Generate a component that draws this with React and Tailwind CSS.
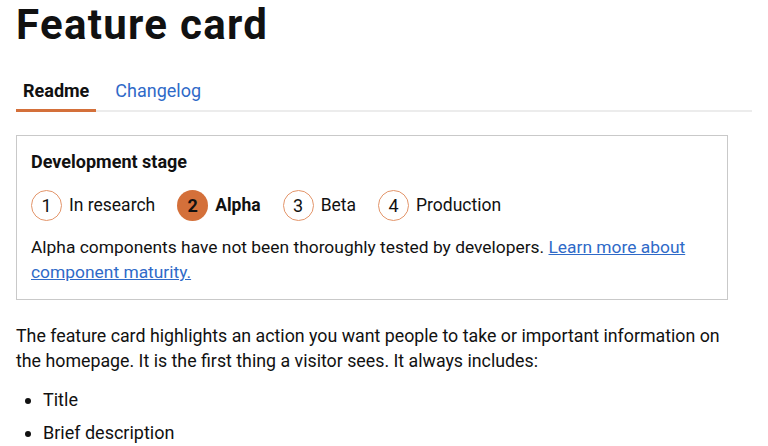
export default function App() {
  const stages = [
    { n: 1, label: "In research" },
    { n: 2, label: "Alpha", active: true },
    { n: 3, label: "Beta" },
    { n: 4, label: "Production" },
  ];

  return (
    <div
      className="min-h-screen bg-white text-[#111] px-4"
      style={{ fontFamily: "Roboto, 'Liberation Sans', sans-serif" }}
    >
      <h1 className="text-[42px] font-bold leading-[50px] tracking-[1.3px]">Feature card</h1>

      {/* tabs */}
      <div className="mt-[29px] flex border-b-2 border-[#ececec]">
        <div className="px-[7px] pb-[6px] border-b-[3px] border-[#d4703a] -mb-[2px] text-[18px] font-bold leading-[24px]">
          Readme
        </div>
        <div className="ml-[12px] px-[7px] pb-[6px] text-[18px] leading-[24px] text-[#2f6ac8]">
          Changelog
        </div>
      </div>

      {/* development stage */}
      <div className="mt-[23px] w-[712px] border border-[#c9c9c9] px-[14px] pt-[14px] pb-[14px]">
        <h2 className="text-[18px] font-bold leading-[24px]">Development stage</h2>
        <div className="mt-[16px] flex items-center gap-[22px]">
          {stages.map((s) => (
            <div key={s.n} className="flex items-center gap-[7px]">
              <span
                className={
                  s.active
                    ? "w-[31px] h-[31px] rounded-full bg-[#d4703a] flex items-center justify-center text-[18px] font-bold"
                    : "w-[31px] h-[31px] rounded-full border border-[#e3956a] flex items-center justify-center text-[18px]"
                }
              >
                {s.n}
              </span>
              <span className={s.active ? "text-[17.5px] font-bold" : "text-[17.5px]"}>{s.label}</span>
            </div>
          ))}
        </div>
        <p className="mt-[14px] text-[17.4px] leading-[25px]">
          Alpha components have not been thoroughly tested by developers.{" "}
          <a href="#" className="text-[#2f6ac8] underline">
            Learn more about component maturity.
          </a>
        </p>
      </div>

      <p className="mt-[23px] text-[17.8px] leading-[25px] w-[720px]">
        The feature card highlights an action you want people to take or important information on
        the homepage. It is the first thing a visitor sees. It always includes:
      </p>
      <ul className="mt-[14px] list-disc pl-[27px] text-[18px] leading-[25px]">
        <li className="mb-[8px]">Title</li>
        <li>Brief description</li>
      </ul>
    </div>
  );
}
